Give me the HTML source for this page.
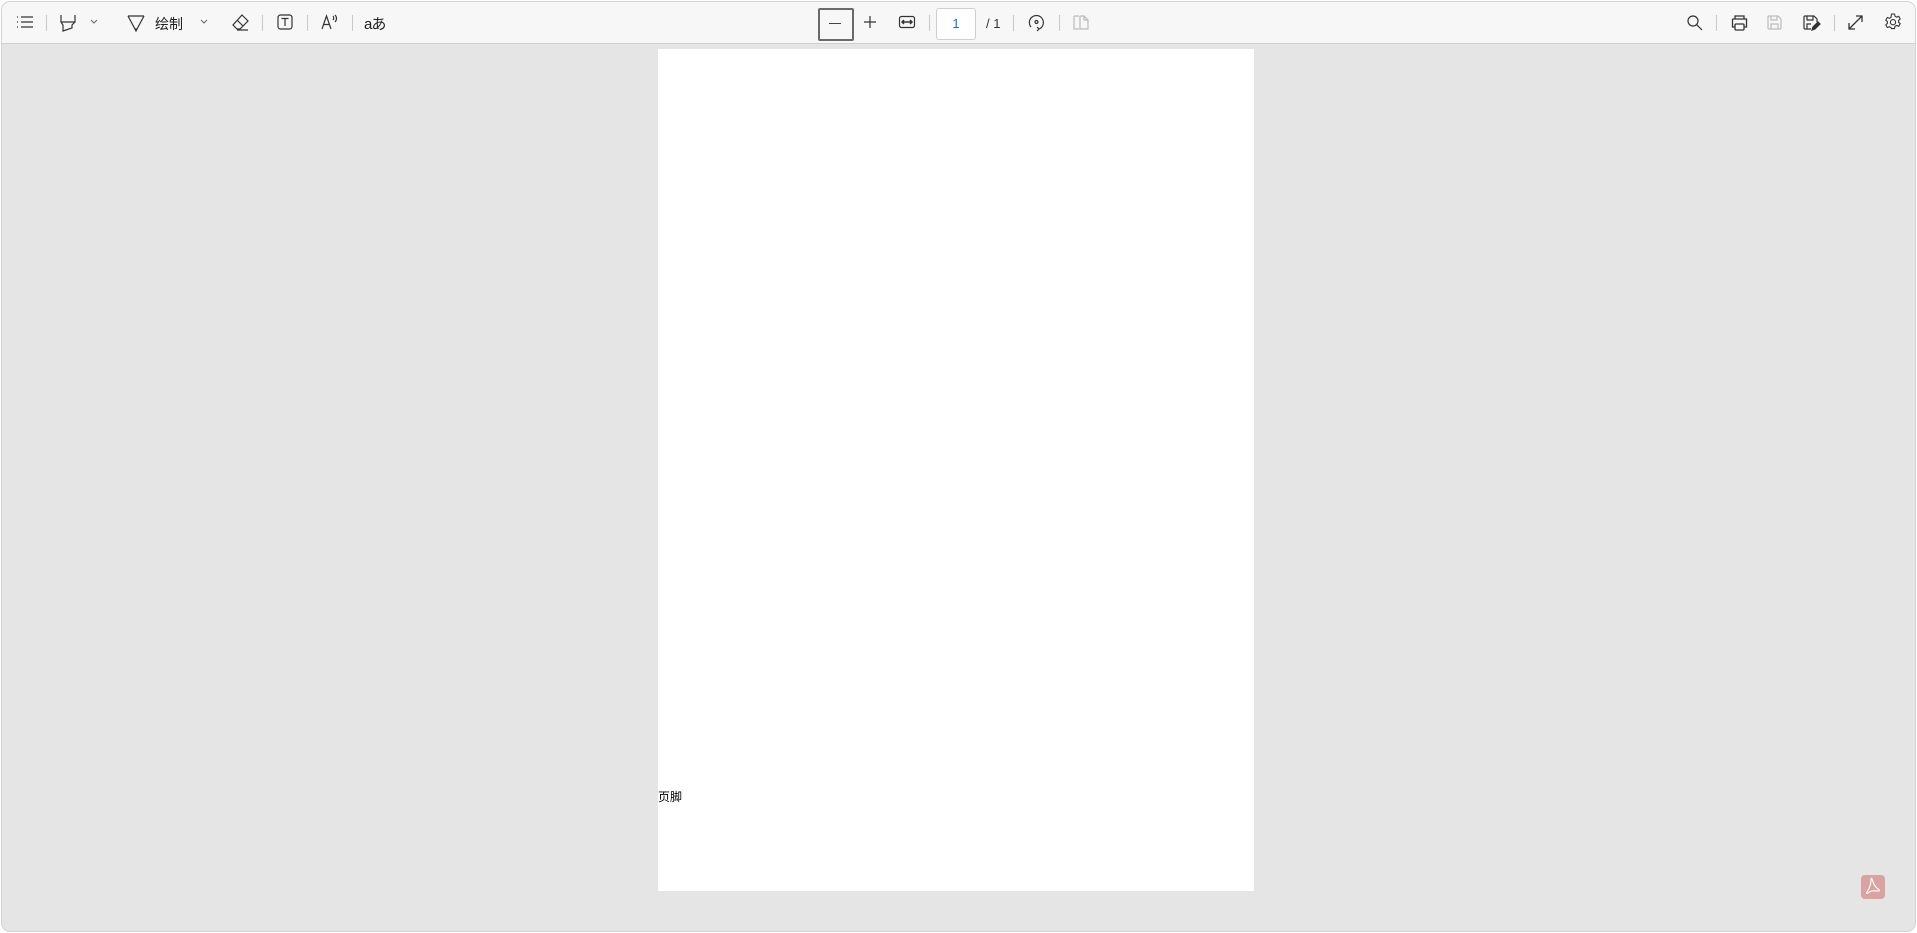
<!DOCTYPE html>
<html><head><meta charset="utf-8"><style>
html,body{margin:0;padding:0;background:#fff;width:1917px;height:933px;overflow:hidden;font-family:"Liberation Sans","Noto Sans CJK SC",sans-serif;}
.frame{position:absolute;left:1px;top:1px;width:1913px;height:929px;border:1px solid #d4d4d4;border-radius:9px;background:#e5e5e5;overflow:hidden;}
.tb{position:absolute;left:0;top:0;right:0;height:41px;background:#f7f7f7;border-bottom:1px solid #cfcfcf;}
.i{position:absolute;top:12px;}
.sep{position:absolute;top:13px;width:1px;height:16px;background:#c8c8c8;}
svg{overflow:visible}
.page{position:absolute;left:656px;top:47px;width:596px;height:842px;background:#fff;}
.ft{position:absolute;left:0;top:739px;font-size:12px;color:#000;}
</style></head><body>
<div class="frame">
<div class="tb">
 <svg class="i" style="left:14px" width="18" height="16" stroke="#333" stroke-width="1.3" fill="none"><path d="M1 3h1M1 8h1M1 13h1M5 3h12M5 8h12M5 13h12"/></svg>
 <div class="sep" style="left:44px"></div>
 <svg class="i" style="left:58px" width="16" height="18" stroke="#333" stroke-width="1.2" fill="none"><path d="M1 1v7h14V1M1 8l2 3v6l9-3v-3l3-3"/></svg>
 <svg class="i" style="left:88px;top:17px" width="8" height="6" stroke="#666" stroke-width="1" fill="none"><path d="M1 1l3 3 3-3"/></svg>
 <svg class="i" style="left:125px" width="18" height="18" stroke="#333" stroke-width="1.2" fill="none"><path d="M1 2h16M1 2l7 13h2l7-13M8 15l1 2 1-2"/></svg>
 <span style="position:absolute;left:153px;top:12px;font-size:14px;color:#222;">绘制</span>
 <svg class="i" style="left:198px;top:17px" width="8" height="6" stroke="#666" stroke-width="1" fill="none"><path d="M1 1l3 3 3-3"/></svg>
 <svg class="i" style="left:230px" width="18" height="18" stroke="#333" stroke-width="1.2" fill="none"><path d="M10 1l6 6-8 8H5l-4-4zM5 6l6 6M5 16h11"/></svg>
 <div class="sep" style="left:260px"></div>
 <svg class="i" style="left:275px" width="16" height="16" stroke="#333" stroke-width="1.2" fill="none"><rect x="1" y="1" width="14" height="14" rx="2.5"/><path d="M4.5 4.5h7M8 4.5v7.5"/></svg>
 <div class="sep" style="left:305px"></div>
 <svg class="i" style="left:319px" width="18" height="16" stroke="#333" stroke-width="1.2" fill="none"><path d="M1 15L5.5 2 10 15M2.8 10.5h5.4M12 2c1 1 1 3 0 4M14 1c2 2 2 5 0 7"/></svg>
 <div class="sep" style="left:350px"></div>
 <span style="position:absolute;left:362px;top:11px;font-size:15px;color:#222;letter-spacing:-1px;">aあ</span>

 <div style="position:absolute;left:816px;top:6px;width:32px;height:29px;border:2px solid #6a6a6a;border-radius:2px;background:#f7f7f7;"></div>
 <div style="position:absolute;left:827px;top:21px;width:12px;height:1px;background:#444;"></div>
 <svg class="i" style="left:862px;top:14px" width="12" height="12" stroke="#333" stroke-width="1.2"><path d="M6 0v12M0 6h12"/></svg>
 <svg class="i" style="left:897px;top:14px" width="16" height="12" stroke="#333" stroke-width="1.2" fill="none"><rect x="0.5" y="0.5" width="15" height="11" rx="2"/><path d="M3 6h10M5 4L3 6l2 2M11 4l2 2-2 2" stroke-width="1.5"/></svg>
 <div class="sep" style="left:927px"></div>
 <div style="position:absolute;left:934px;top:6px;width:38px;height:30px;border:1px solid #cfcfcf;border-radius:3px;background:#fff;font-size:13px;color:#1a6fd0;text-align:center;line-height:30px;">1</div>
 <span style="position:absolute;left:984px;top:14px;font-size:13px;color:#333;">/ 1</span>
 <div class="sep" style="left:1011px"></div>
 <svg class="i" style="left:1026px" width="17" height="18" stroke="#333" stroke-width="1.2" fill="none"><path d="M3 13A7 7 0 1 1 11 15"/><path d="M9 13l2 2-2 2"/><circle cx="8.5" cy="8" r="1.5"/></svg>
 <div class="sep" style="left:1057px"></div>
 <svg class="i" style="left:1071px;top:13px" width="16" height="15" stroke="#bbb" stroke-width="1.2" fill="none"><path d="M1 1h4M1 1v13h4M7 1h4l4 4v9H7V1M11 1v4h4"/><path d="M5 1h2M5 14h2" stroke-dasharray="1 1"/></svg>

 <svg class="i" style="left:1685px;top:13px" width="16" height="16" stroke="#333" stroke-width="1.2" fill="none"><circle cx="6" cy="6" r="5"/><path d="M9.8 9.8L15 15"/></svg>
 <div class="sep" style="left:1714px"></div>
 <svg class="i" style="left:1729px;top:13px" width="17" height="16" stroke="#333" stroke-width="1.3" fill="none"><path d="M4 4V1h9v3M1.5 4h14v8h-2.5M4 12H1.5V4"/><rect x="4" y="9" width="9" height="6" rx="1"/></svg>
 <svg class="i" style="left:1765px;top:13px" width="15" height="15" stroke="#bbb" stroke-width="1.2" fill="none"><path d="M1 2a1 1 0 0 1 1-1h9l3 3v9a1 1 0 0 1-1 1H2a1 1 0 0 1-1-1z"/><path d="M4 1v4h6V1M4 14V9h7v5"/></svg>
 <svg class="i" style="left:1801px;top:13px" width="17" height="16" stroke="#333" stroke-width="1.2" fill="none"><path d="M8 14H2a1 1 0 0 1-1-1V2a1 1 0 0 1 1-1h9l3 3v3"/><path d="M4 1v4h6V1M4 14V9h4"/><path d="M9 15l1-3 5-5 2 2-5 5z" fill="#333"/></svg>
 <div class="sep" style="left:1832px"></div>
 <svg class="i" style="left:1846px;top:13px" width="15" height="15" stroke="#333" stroke-width="1.3" fill="none"><path d="M1 14L14 1M8 1h6v6M1 8v6h6"/></svg>
 <svg class="i" style="left:1882px;top:11px" width="18" height="18" stroke="#333" stroke-width="1.1" fill="none"><path d="M7.5 1h3l.5 2.2 1.6.9 2.1-.8 1.5 2.6-1.6 1.5v1.8l1.6 1.5-1.5 2.6-2.1-.8-1.6.9-.5 2.2h-3L7 14.6l-1.6-.9-2.1.8-1.5-2.6 1.6-1.5V8.6L1.8 7.1l1.5-2.6 2.1.8L7 4.4z"/><circle cx="9" cy="9.2" r="2.6"/></svg>
</div>

<div class="page"><div class="ft">页脚</div></div>

<div style="position:absolute;left:1859px;top:873px;width:24px;height:24px;border-radius:4px;background:#d9a3a1;">
 <svg width="24" height="24" stroke="#fff" stroke-width="1.1" fill="none"><path d="M11 4c1 3 2 7 6 10 2 1 2 2 0 2-3 0-7-1-10 2-1 1-2 0-1-1 2-3 4-8 4-12 0-2 1-2 1-1z"/></svg>
</div>
</div>
</body></html>
